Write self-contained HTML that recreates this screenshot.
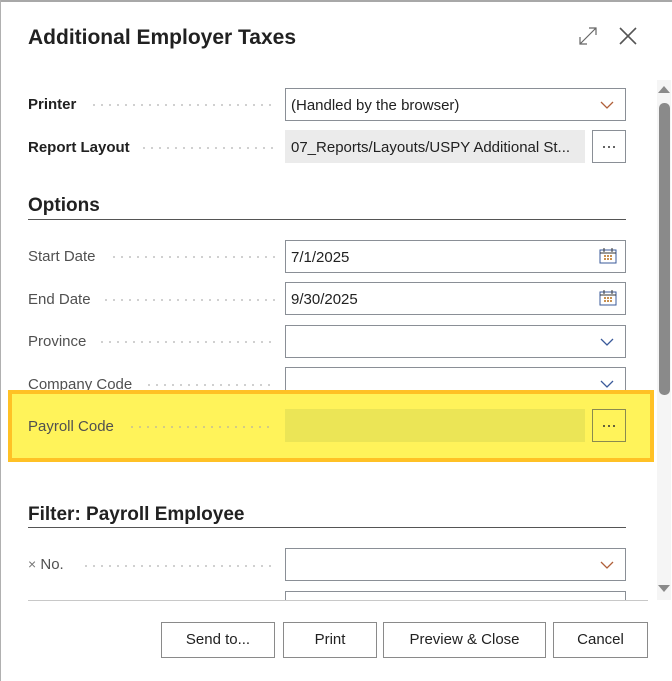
<!DOCTYPE html>
<html><head><meta charset="utf-8"><style>
*{box-sizing:border-box;margin:0;padding:0}
body{width:672px;height:681px;overflow:hidden;background:#fff;font-family:"Liberation Sans",sans-serif;position:relative;color:#212121}
.a{position:absolute}
.lbl{position:absolute;left:28px;font-size:15px;color:#505050;white-space:nowrap}
.b{font-weight:bold;color:#212121}
.dots{position:absolute;height:2px;background:radial-gradient(circle,#c4c4c4 0.9px,transparent 1.1px) 0 0/8px 2px repeat-x}
.in{position:absolute;left:285px;width:341px;height:33px;border:1px solid #8a8f96;background:#fff;font-size:15px;padding:8px 5px;color:#212121}
.chev{position:absolute;right:10px;top:10px}
.h{position:absolute;left:28px;font-size:19px;font-weight:bold;color:#212121}
.hl{position:absolute;left:28px;width:598px;height:1px;background:#555}
.btn{position:absolute;top:622px;height:36px;border:1px solid #8a8a8a;background:#fff;font-size:15px;text-align:center;line-height:34px;color:#212121}
.cal{position:absolute;right:8px;top:7px}
.ell{position:absolute;width:34px;height:33px;border:1px solid #8a8f96;display:flex;align-items:center;justify-content:center;gap:3px}
.ell i{width:2px;height:2px;background:#333;border-radius:1px;display:block}
</style></head><body>
<div class="a" style="left:0;top:0;width:672px;height:2px;background:#a8a8a8"></div>
<div class="a" style="left:0;top:0;width:1px;height:681px;background:#b0b0b0"></div>
<div class="a" style="left:28px;top:26px;font-size:21px;font-weight:bold;color:#212121">Additional Employer Taxes</div>
<svg class="a" style="left:578px;top:26px" width="20" height="20" viewBox="0 0 20 20" fill="none" stroke="#666" stroke-width="1.2"><path d="M2 18L18 2M11 2h7v7M2 11v7h7"/></svg>
<svg class="a" style="left:618px;top:26px" width="20" height="20" viewBox="0 0 20 20" fill="none" stroke="#555" stroke-width="1.6"><path d="M2 2L18 18M18 2L2 18"/></svg>

<div class="a" style="left:657px;top:80px;width:14px;height:520px;background:#f5f5f5"></div>
<svg class="a" style="left:657px;top:83px" width="14" height="12"><path d="M1 10L7 3L13 10Z" fill="#8a8a8a"/></svg>
<div class="a" style="left:659px;top:103px;width:11px;height:292px;background:#8a8a8a;border-radius:5px"></div>
<svg class="a" style="left:657px;top:583px" width="14" height="12"><path d="M1 2L7 9L13 2Z" fill="#8a8a8a"/></svg>

<div class="lbl b" style="top:96px">Printer</div><div class="dots" style="left:90px;top:104px;width:185px"></div>
<div class="in" style="top:88px">(Handled by the browser)<svg class="chev" width="16" height="12"><path d="M2 3L8 9L14 3" fill="none" stroke="#b0603a" stroke-width="1.3"/></svg></div>
<div class="lbl b" style="top:139px">Report Layout</div><div class="dots" style="left:140px;top:147px;width:135px"></div>
<div class="in" style="top:130px;width:300px;background:#ebebeb;border:none;padding:9px 6px">07_Reports/Layouts/USPY Additional St...</div>
<div class="ell" style="left:592px;top:130px"><i></i><i></i><i></i></div>

<div class="h" style="top:195px">Options</div><div class="hl" style="top:219px"></div>

<div class="lbl" style="top:248px">Start Date</div><div class="dots" style="left:110px;top:256px;width:165px"></div>
<div class="in" style="top:240px">7/1/2025<svg class="cal" width="18" height="16"><rect x="1" y="2" width="16" height="13" fill="none" stroke="#3a5a9a"/><line x1="1" y1="5" x2="17" y2="5" stroke="#333"/><path d="M5 0v4M13 0v4" stroke="#333"/><g fill="#c89050"><rect x="5" y="7" width="2" height="2"/><rect x="8" y="7" width="2" height="2"/><rect x="11" y="7" width="2" height="2"/><rect x="5" y="10" width="2" height="2"/><rect x="8" y="10" width="2" height="2"/><rect x="11" y="10" width="2" height="2"/></g></svg></div>
<div class="lbl" style="top:291px">End Date</div><div class="dots" style="left:102px;top:299px;width:173px"></div>
<div class="in" style="top:282px">9/30/2025<svg class="cal" width="18" height="16"><rect x="1" y="2" width="16" height="13" fill="none" stroke="#3a5a9a"/><line x1="1" y1="5" x2="17" y2="5" stroke="#333"/><path d="M5 0v4M13 0v4" stroke="#333"/><g fill="#c89050"><rect x="5" y="7" width="2" height="2"/><rect x="8" y="7" width="2" height="2"/><rect x="11" y="7" width="2" height="2"/><rect x="5" y="10" width="2" height="2"/><rect x="8" y="10" width="2" height="2"/><rect x="11" y="10" width="2" height="2"/></g></svg></div>
<div class="lbl" style="top:333px">Province</div><div class="dots" style="left:98px;top:341px;width:177px"></div>
<div class="in" style="top:325px"><svg class="chev" width="16" height="12"><path d="M2 3L8 9L14 3" fill="none" stroke="#3a5a9a" stroke-width="1.3"/></svg></div>
<div class="lbl" style="top:376px">Company Code</div><div class="dots" style="left:145px;top:384px;width:130px"></div>
<div class="in" style="top:367px"><svg class="chev" width="16" height="12"><path d="M2 3L8 9L14 3" fill="none" stroke="#3a5a9a" stroke-width="1.3"/></svg></div>

<div class="a" style="left:8px;top:390px;width:646px;height:72px;background:#fff35a;border:4px solid #ffc125"></div>
<div class="lbl" style="top:418px;color:#505050">Payroll Code</div><div class="dots" style="left:128px;top:426px;width:147px;background:radial-gradient(circle,#c8c290 0.9px,transparent 1.1px) 0 0/8px 2px repeat-x"></div>
<div class="a" style="left:285px;top:409px;width:300px;height:33px;background:#ebe556"></div>
<div class="ell" style="left:592px;top:409px;border-color:#8a8a50"><i></i><i></i><i></i></div>

<div class="h" style="top:504px">Filter: Payroll Employee</div><div class="hl" style="top:527px"></div>
<div class="lbl" style="top:556px"><span style="color:#777;font-size:14px">×</span> No.</div><div class="dots" style="left:82px;top:565px;width:193px"></div>
<div class="in" style="top:548px"><svg class="chev" width="16" height="12"><path d="M2 3L8 9L14 3" fill="none" stroke="#b0603a" stroke-width="1.3"/></svg></div>
<div class="a" style="left:285px;top:591px;width:341px;height:9px;border:1px solid #8a8f96;border-bottom:none"></div>
<div class="a" style="left:28px;top:600px;width:620px;height:1px;background:#c8c8c8"></div>

<div class="btn" style="left:161px;width:114px">Send to...</div>
<div class="btn" style="left:283px;width:94px">Print</div>
<div class="btn" style="left:383px;width:163px">Preview &amp; Close</div>
<div class="btn" style="left:553px;width:95px">Cancel</div>
</body></html>
